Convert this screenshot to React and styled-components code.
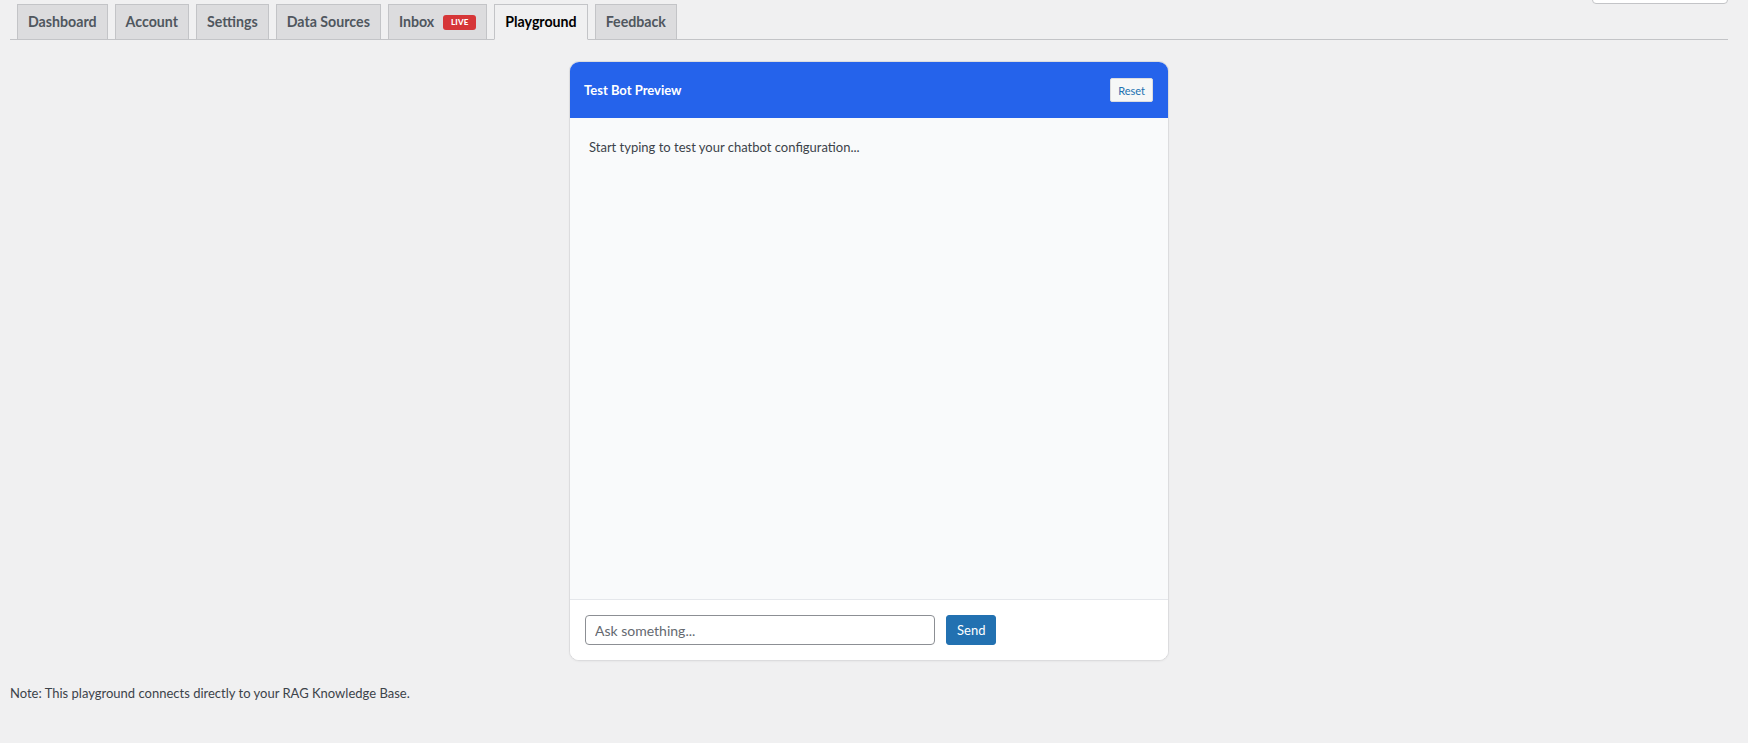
import React from "react";
import styled, { createGlobalStyle } from "styled-components";

const GlobalStyle = createGlobalStyle`
  html, body {
    margin: 0;
    padding: 0;
    background: #f0f0f1;
    font-family: Lato, "Liberation Sans", sans-serif;
    color: #3c434a;
  }
  * { box-sizing: border-box; }
`;

const Page = styled.div`
  position: relative;
  padding: 0 20px 0 10px;
`;

const CornerBox = styled.div`
  position: absolute;
  top: -20px;
  right: 20px;
  width: 136px;
  height: 24px;
  background: #fff;
  border: 1px solid #c3c4c7;
  border-radius: 4px;
`;

const TabBar = styled.nav`
  display: flex;
  align-items: flex-end;
  padding-top: 4px;
  border-bottom: 1px solid #c3c4c7;
`;

const Tab = styled.a`
  display: flex;
  align-items: center;
  gap: 9px;
  margin-left: 7px;
  margin-bottom: -1px;
  padding: 5px 10px;
  line-height: 24px;
  font-size: 14.2px;
  font-weight: 700;
  border: 1px solid #c3c4c7;
  border-bottom-color: ${(p) => (p.$active ? "#f0f0f1" : "#c3c4c7")};
  background: ${(p) => (p.$active ? "#f0f0f1" : "#dcdcde")};
  color: ${(p) => (p.$active ? "#000" : "#50575e")};
  text-decoration: none;
  white-space: nowrap;
`;

const LiveBadge = styled.span`
  display: inline-flex;
  align-items: center;
  justify-content: center;
  width: 33px;
  height: 15px;
  border-radius: 3px;
  background: #d63638;
  color: #fff;
  font-size: 8px;
  font-weight: 900;
  letter-spacing: 0.2px;
  line-height: 1;
`;

const Card = styled.section`
  width: 600px;
  height: 600px;
  margin: 21px auto 0;
  display: flex;
  flex-direction: column;
  background: #fff;
  border: 1px solid #dcdcde;
  border-radius: 10px;
  overflow: hidden;
  box-shadow: 0 1px 2px rgba(0, 0, 0, 0.04);
`;

const CardHeader = styled.header`
  display: flex;
  align-items: center;
  justify-content: space-between;
  height: 56px;
  padding: 0 15px 0 14px;
  background: #2563eb;
`;

const CardTitle = styled.h3`
  margin: 0;
  color: #fff;
  font-size: 13px;
  font-weight: 700;
`;

const ResetButton = styled.button`
  height: 24px;
  padding: 0 7px;
  border: 1px solid #dcdcde;
  border-radius: 2px;
  background: #f6f7f7;
  color: #2271b1;
  font-family: inherit;
  font-size: 11px;
  cursor: pointer;
`;

const Messages = styled.div`
  flex: 1;
  padding: 20px 19px;
  background: #f9fafb;
  font-size: 13px;
  line-height: 18px;
  color: #3c434a;
`;

const Composer = styled.form`
  display: flex;
  align-items: center;
  gap: 11px;
  padding: 15px;
  border-top: 1px solid #e5e7eb;
  background: #fff;
`;

const Input = styled.input`
  width: 350px;
  height: 30px;
  padding: 0 9px;
  border: 1px solid #8c8f94;
  border-radius: 4px;
  font-family: inherit;
  font-size: 14px;
  color: #2c3338;
  &::placeholder { color: #646970; }
`;

const SendButton = styled.button`
  height: 30px;
  padding: 0 10px;
  border: 1px solid #2271b1;
  border-radius: 3px;
  background: #2271b1;
  color: #fff;
  font-family: inherit;
  font-size: 13px;
  cursor: pointer;
`;

const Note = styled.p`
  margin: 23px 0 0;
  font-size: 13px;
  line-height: 18px;
  color: #3c434a;
`;

const tabs = ["Dashboard", "Account", "Settings", "Data Sources", "Inbox", "Playground", "Feedback"];

export default function App() {
  return (
    <>
      <GlobalStyle />
      <Page>
        <CornerBox />
        <TabBar>
          {tabs.map((t) => (
            <Tab key={t} href="#" $active={t === "Playground"}>
              {t}
              {t === "Inbox" && <LiveBadge>LIVE</LiveBadge>}
            </Tab>
          ))}
        </TabBar>
        <Card>
          <CardHeader>
            <CardTitle>Test Bot Preview</CardTitle>
            <ResetButton type="button">Reset</ResetButton>
          </CardHeader>
          <Messages>Start typing to test your chatbot configuration...</Messages>
          <Composer onSubmit={(e) => e.preventDefault()}>
            <Input type="text" placeholder="Ask something..." />
            <SendButton type="submit">Send</SendButton>
          </Composer>
        </Card>
        <Note>Note: This playground connects directly to your RAG Knowledge Base.</Note>
      </Page>
    </>
  );
}
